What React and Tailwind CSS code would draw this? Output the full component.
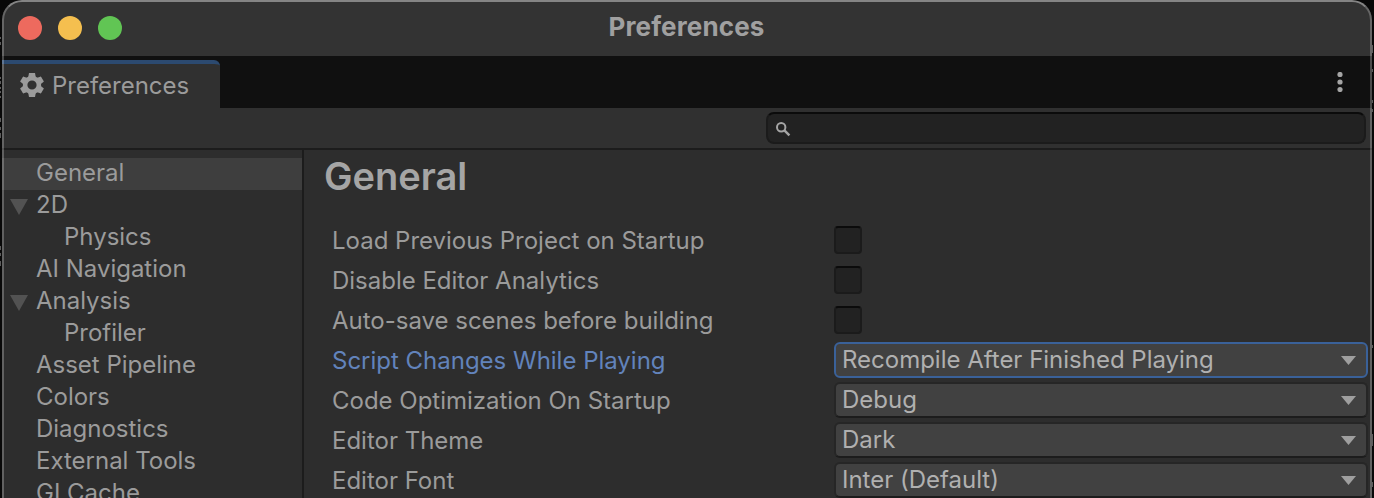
import React from 'react';

const sections = [
  { label: 'General', selected: true },
  { label: '2D', open: true },
  { label: 'Physics', child: true },
  { label: 'AI Navigation' },
  { label: 'Analysis', open: true },
  { label: 'Profiler', child: true },
  { label: 'Asset Pipeline' },
  { label: 'Colors' },
  { label: 'Diagnostics' },
  { label: 'External Tools' },
  { label: 'GI Cache' },
];

const toggles = [
  'Load Previous Project on Startup',
  'Disable Editor Analytics',
  'Auto-save scenes before building',
];

const choices = [
  { label: 'Script Changes While Playing', value: 'Recompile After Finished Playing', focused: true },
  { label: 'Code Optimization On Startup', value: 'Debug' },
  { label: 'Editor Theme', value: 'Dark' },
  { label: 'Editor Font', value: 'Inter (Default)' },
];

// Slivers of the window behind, visible beside the left and right edges: [top, height]
const behindLeft = [[37, 2], [42, 3], [77, 2], [81, 3], [87, 2], [91, 2], [96, 2], [118, 4], [127, 3], [133, 5], [246, 4], [253, 3], [261, 5]];
const behindRight = [[45, 8], [69, 3], [100, 3], [109, 3], [345, 3], [434, 12], [482, 5]];

function Edge({ marks }) {
  return (
    <svg width="2" height="498" viewBox="0 0 2 498" className="shrink-0">
      {marks.map(([y, h]) => (
        <rect key={y} x="0" y={y} width="1" height={h} fill="#5c5c5c" />
      ))}
    </svg>
  );
}

function Gear() {
  return (
    <svg width="24" height="24" viewBox="0 0 24 24" className="-mt-[2px] shrink-0">
      <g fill="#9b9b9b">
        <path fillRule="evenodd" d="M12 2.8a9.2 9.2 0 1 0 0 18.4a9.2 9.2 0 0 0 0-18.4zm0 4.6a4.6 4.6 0 1 1 0 9.2a4.6 4.6 0 0 1 0-9.2z" />
        {[0, 60, 120, 180, 240, 300].map((a) => (
          <path key={a} d="M9 0h6l.8 4.6H8.2z" transform={`rotate(${a} 12 12)`} />
        ))}
      </g>
    </svg>
  );
}

function Dropdown({ value, focused }) {
  return (
    <div
      className={
        focused
          ? 'flex h-9 w-[534px] items-center justify-between rounded-md border-2 border-[#3a6199] bg-[#414141] pl-[6px] pr-[10px]'
          : 'flex h-9 w-[534px] items-center justify-between rounded-md border-2 border-[#262626] border-b-[#1c1c1c] bg-[#414141] pl-[6px] pr-[10px]'
      }
    >
      <span className="-mt-px text-[#b0b0b0]">{value}</span>
      <svg width="15" height="9" viewBox="0 0 15 9">
        <path d="M0 0h15L7.5 9z" fill="#9f9f9f" />
      </svg>
    </div>
  );
}

export default function App() {
  return (
    <div className="flex h-[498px] w-[1374px] overflow-hidden bg-[#080808] font-['Inter',sans-serif] text-[24px] leading-8 tracking-[-0.01px] text-[#9b9b9b]">
      <Edge marks={behindLeft} />
      <div className="relative flex h-[520px] w-[1370px] shrink-0 flex-col overflow-hidden rounded-[20px] bg-[#2d2d2d]">
        <header className="flex h-14 shrink-0 items-center bg-[#333333] pl-4">
          <div className="flex gap-4">
            <span className="size-6 rounded-full bg-[#ed6a5e]" />
            <span className="size-6 rounded-full bg-[#f5bf4f]" />
            <span className="size-6 rounded-full bg-[#61c554]" />
          </div>
          <h1 className="-ml-[121px] grow pb-[2px] text-center text-[26px] font-bold tracking-[0.15px] text-[#a0a0a0]">Preferences</h1>
        </header>

        <div className="flex h-[52px] shrink-0 items-end justify-between bg-[#101010]">
          <div className="flex h-12 w-[218px] items-center gap-2 rounded-tr-md border-t-4 border-[#2c4a70] bg-[#303030] pl-[18px]">
            <Gear />
            <span className="-mt-px">Preferences</span>
          </div>
          <svg width="6" height="20" viewBox="0 0 6 20" className="mr-[29px] mb-4" fill="#a5a5a5">
            <circle cx="3" cy="2.5" r="2.6" />
            <circle cx="3" cy="10" r="2.6" />
            <circle cx="3" cy="17.5" r="2.6" />
          </svg>
        </div>

        <div className="flex h-[42px] shrink-0 justify-end border-b-2 border-[#1c1c1c] bg-[#303030] pr-[6px] pt-1">
          <div className="flex h-8 w-[600px] items-center rounded-lg border-2 border-[#1b1b1b] border-t-[#0b0b0b] bg-[#222222] pl-2">
            <svg width="15" height="15" viewBox="0 0 15 15" fill="none" stroke="#a5a5a5" className="mt-[2px]">
              <circle cx="5.2" cy="5.2" r="4.2" strokeWidth="2" />
              <path d="M8.2 8.2l5.2 5.2" strokeWidth="2.4" />
            </svg>
          </div>
        </div>

        <div className="flex min-h-0 grow">
          <nav className="w-[300px] shrink-0 pt-2">
            {sections.map((s) => (
              <div
                key={s.label}
                className={`flex h-8 items-center ${s.selected ? 'bg-[#3e3e3e]' : ''} ${s.child ? 'pl-[62px]' : s.open ? 'pl-2' : 'pl-[34px]'}`}
              >
                {s.open && (
                  <svg width="18" height="16" viewBox="0 0 18 16" className="mr-2 mt-px">
                    <path d="M0 0h18L9 16z" fill="#525252" />
                  </svg>
                )}
                <span className="-mt-[2px]">{s.label}</span>
              </div>
            ))}
          </nav>
          <main className="grow border-l-2 border-[#1c1c1c] pl-7">
            <h2 className="-ml-2 h-[70px] pt-[2px] text-[38px] leading-[48px] font-semibold tracking-[0px] text-[#a5a5a5]">General</h2>
            {toggles.map((label) => (
              <div key={label} className="flex h-10 items-center">
                <span className="w-[502px] pt-[2px]">{label}</span>
                <span className="size-7 rounded border-2 border-[#1b1b1b] border-t-[#0b0b0b] bg-[#222222]" />
              </div>
            ))}
            {choices.map((c) => (
              <div key={c.label} className="flex h-10 items-center">
                <span className={c.focused ? 'w-[502px] pt-[2px] text-[#6283bb]' : 'w-[502px] pt-[2px]'}>{c.label}</span>
                <Dropdown value={c.value} focused={c.focused} />
              </div>
            ))}
          </main>
        </div>
        <div className="pointer-events-none absolute inset-0 rounded-[20px] border-2 border-white/25 border-t-white/40" />
      </div>
      <Edge marks={behindRight} />
    </div>
  );
}
